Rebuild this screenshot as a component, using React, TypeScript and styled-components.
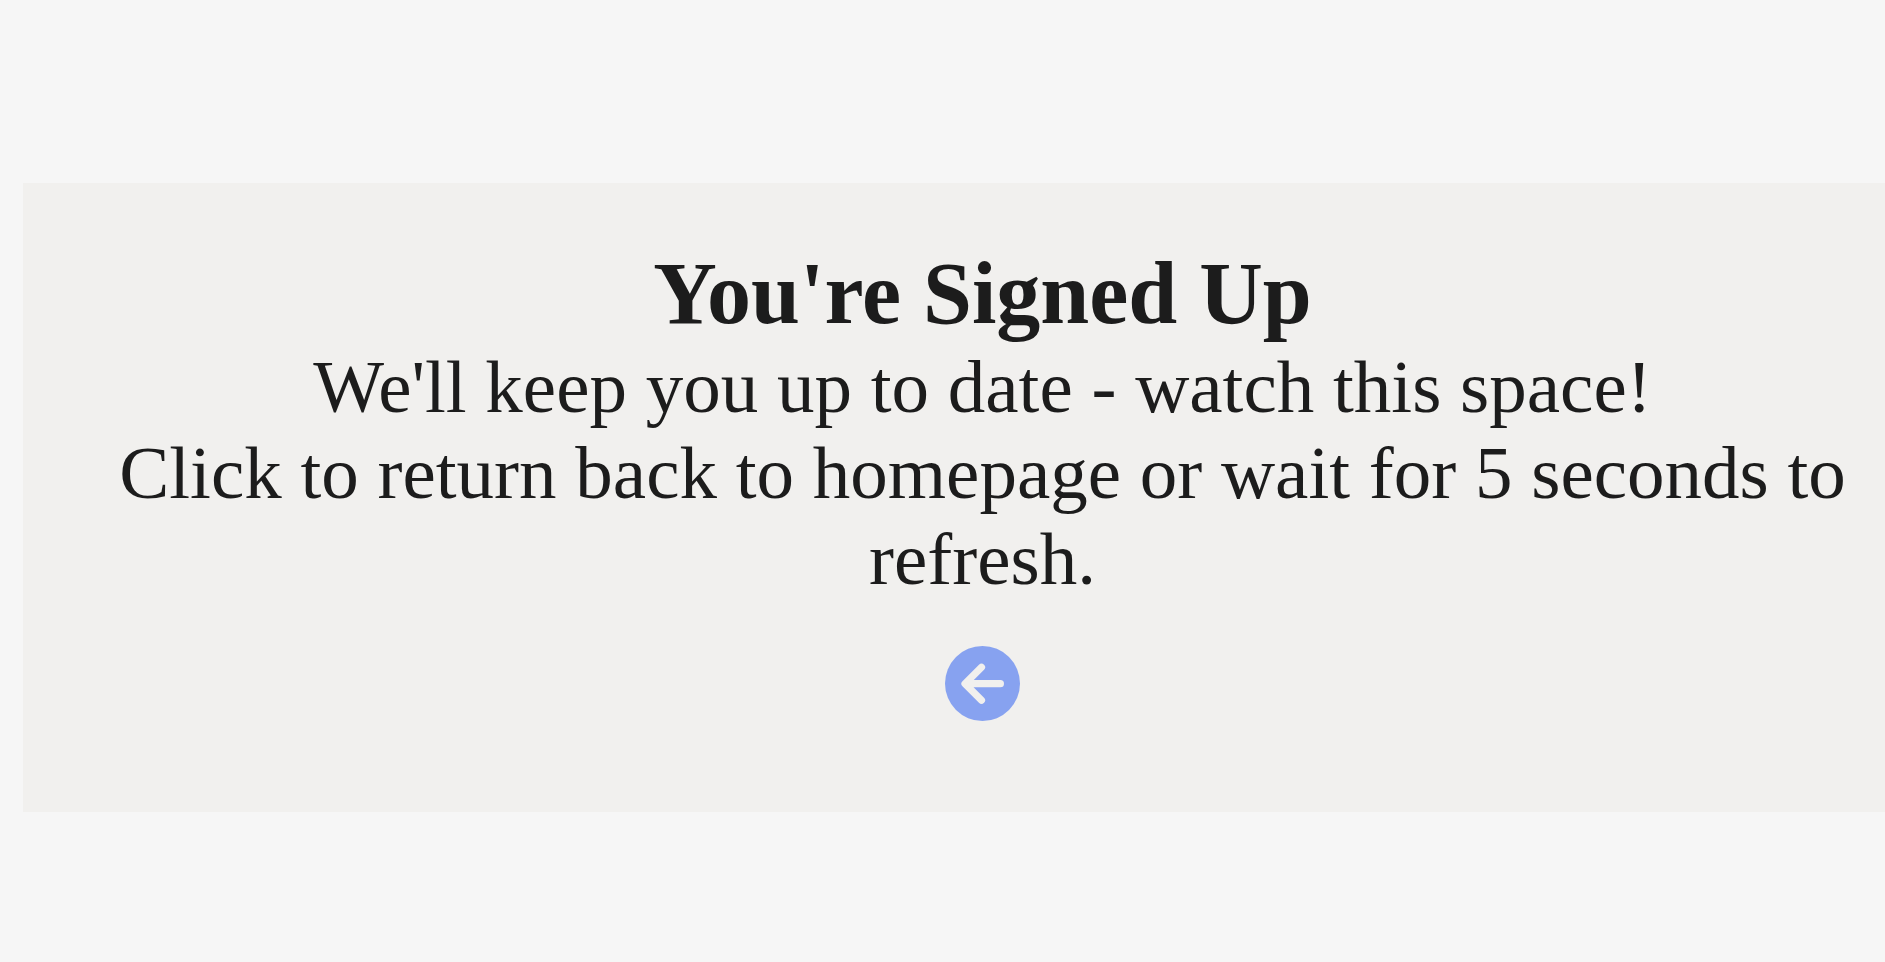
import React from "react";
import styled, { createGlobalStyle } from "styled-components";

const GlobalStyle = createGlobalStyle`
  body {
    margin: 0;
    background: #f6f6f6;
    color: #1c1c1c;
    font-family: "Liberation Serif", "Times New Roman", serif;
    overflow: hidden;
  }
`;

const Page = styled.main`
  padding: 183px 0 0 23px;
`;

const Panel = styled.section`
  display: flex;
  flex-direction: column;
  align-items: center;
  box-sizing: border-box;
  width: calc(100% + 57px);
  padding: 60px 80px 91px;
  background: #f1f0ee;
  text-align: center;
`;

const Title = styled.h1`
  margin: 0;
  font-size: 88px;
  line-height: 101px;
`;

const Message = styled.p`
  margin: 0;
  font-size: 75px;
  line-height: 86px;
`;

const BackButton = styled.button`
  display: flex;
  margin-top: 44px;
  padding: 0;
  border: 0;
  border-radius: 50%;
  background: none;
  cursor: pointer;
`;

const BackIcon = styled.svg`
  display: block;
  width: 75px;
  height: 75px;
`;

export default function App() {
  return (
    <>
      <GlobalStyle />
      <Page>
        <Panel>
          <Title>You're Signed Up</Title>
          <Message>We'll keep you up to date - watch this space!</Message>
          <Message>Click to return back to homepage or wait for 5 seconds to refresh.</Message>
          <BackButton type="button" aria-label="Return to homepage">
            <BackIcon viewBox="0 0 75 75" aria-hidden="true">
              <circle cx="37.5" cy="37.5" r="37.5" fill="#87a2f0" />
              <path d="M36.5 21.3L20 37.7L36.5 54.2M21 37.7H55.4" fill="none" stroke="#f1f0ee" strokeWidth="7.2" strokeLinecap="round" strokeLinejoin="round" />
            </BackIcon>
          </BackButton>
        </Panel>
      </Page>
    </>
  );
}
